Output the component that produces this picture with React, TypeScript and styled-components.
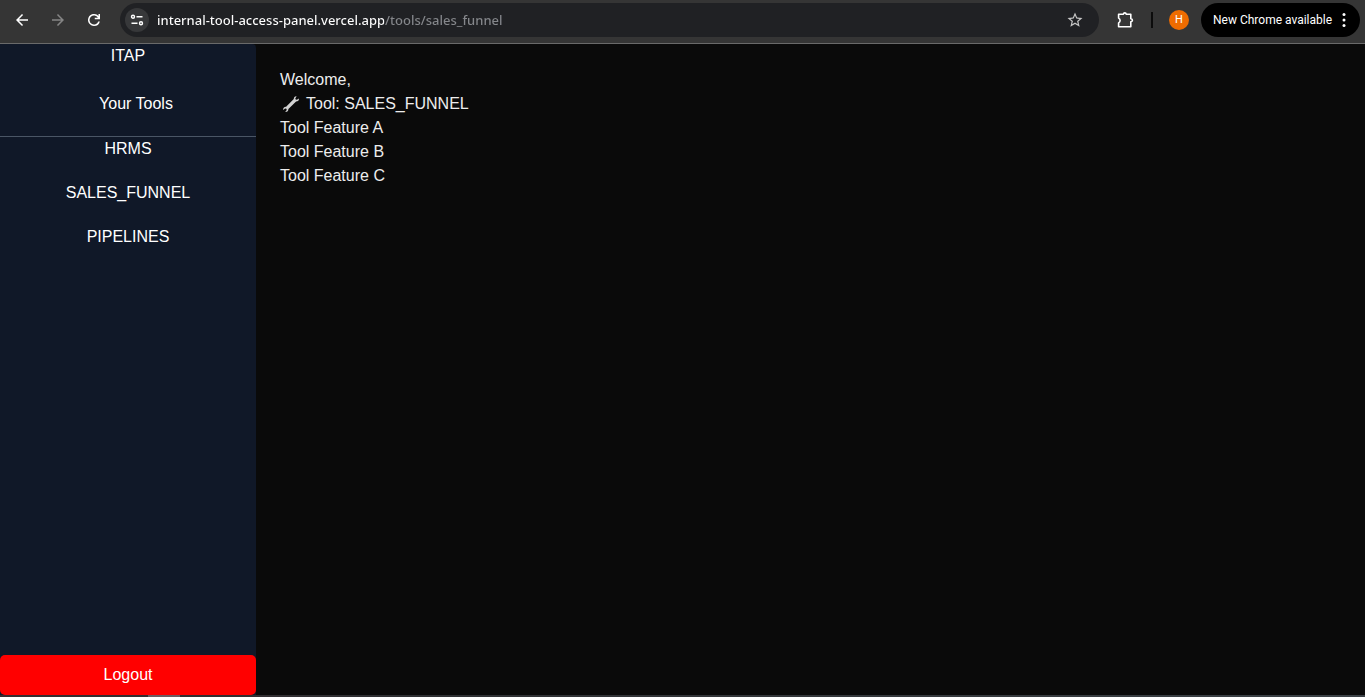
import React from "react";
import styled, { createGlobalStyle } from "styled-components";

const GlobalStyle = createGlobalStyle`
  *, *::before, *::after { box-sizing: border-box; }
  html, body, #root { height: 100%; }
  body {
    margin: 0;
    background: #0a0a0a;
    color: #ededed;
    font: 16px/24px "Liberation Sans", Arial, sans-serif;
  }
  button, input { margin: 0; padding: 0; border: 0; font: inherit; }
  button { cursor: pointer; }
`;

const Window = styled.div`
  display: flex;
  flex-direction: column;
  min-height: 100%;
`;

const BrowserBar = styled.header`
  display: flex;
  align-items: center;
  height: 44px;
  padding: 0 5px 4px 4px;
  border-bottom: 1px solid #6a6a6a;
  background: #353535;
  font-family: "Noto Sans", "Segoe UI", sans-serif;
`;

const IconButton = styled.button<{ $tone?: string }>`
  display: flex;
  flex: none;
  align-items: center;
  justify-content: center;
  width: 36px;
  height: 34px;
  background: transparent;
  color: ${(p) => p.$tone ?? "#ffffff"};
`;

const AddressBar = styled.div`
  display: flex;
  flex: 1;
  align-items: center;
  min-width: 0;
  height: 34px;
  margin: 0 8px;
  padding: 0 6px 0 5px;
  border-radius: 17px;
  background: #202124;
`;

const SiteInfo = styled(IconButton)`
  width: 24px;
  height: 24px;
  border-radius: 50%;
  background: #37383a;
`;

/* The host is bright and the path that follows it is dimmed. */
const AddressInput = styled.input`
  flex: 1;
  min-width: 0;
  height: 24px;
  margin-left: 8px;
  color: #ffffff;
  font-size: 13px;
  font-weight: 500;
  outline: none;
  background: linear-gradient(90deg, #ffffff 227px, #85878b 227px);
  background-clip: text;
  -webkit-background-clip: text;
  -webkit-text-fill-color: transparent;
`;

const Divider = styled.span`
  width: 2px;
  height: 16px;
  margin: 0 16px 0 8px;
  background: #0c0c0c;
`;

const Avatar = styled.button`
  flex: none;
  width: 20px;
  height: 20px;
  margin-right: 12px;
  border-radius: 50%;
  background: #ef6c00;
  color: #ffffff;
  font: 11px/20px Roboto, sans-serif;
`;

const UpdateButton = styled.button`
  display: flex;
  flex: none;
  align-items: center;
  justify-content: space-between;
  width: 159px;
  height: 34px;
  padding: 0 14px 0 12px;
  border-radius: 17px;
  background: #000000;
  color: #ffffff;
  font: 12px/24px Roboto, sans-serif;
  white-space: nowrap;
`;

const Page = styled.div`
  display: flex;
  flex: 1;
`;

const Sidebar = styled.aside`
  display: flex;
  flex: none;
  flex-direction: column;
  width: 256px;
  border-top-right-radius: 4px;
  background: #101828;
  color: #ffffff;
  text-align: center;
`;

const Brand = styled.div`
  padding-bottom: 24px;
`;

const SidebarTitle = styled.h2`
  margin: 0;
  padding: 0 0 20px 16px;
  border-bottom: 1px solid #4a5565;
  font-size: 16px;
  font-weight: 400;
`;

const ToolNav = styled.nav`
  display: flex;
  flex: 1;
  flex-direction: column;
  gap: 20px;
`;

const ToolLink = styled.a`
  color: inherit;
  text-decoration: none;
`;

const LogoutButton = styled.button`
  height: 40px;
  border-radius: 5px;
  background: #ff0000;
  color: #ffffff;
`;

const Content = styled.main`
  flex: 1;
  min-width: 0;
  padding: 24px;
`;

const Line = styled.p`
  display: flex;
  align-items: center;
  margin: 0;
`;

const WrenchSlot = styled.span`
  display: flex;
  justify-content: center;
  width: 22px;
  margin-right: 4px;
`;

const BottomEdge = styled.footer`
  display: flex;
  height: 2px;
  padding-left: 148px;
  background: linear-gradient(90deg, #372e32, #2e2f32 30%, #3b4146);
`;

const ActiveMark = styled.span`
  width: 32px;
  background: #6c5c62;
`;

const Glyph = ({ d, size = 18 }: { d: string; size?: number }) => (
  <svg width={size} height={size} viewBox="0 0 24 24" fill="currentColor" aria-hidden="true">
    <path d={d} />
  </svg>
);

const BACK = "M20 11H7.83l5.59-5.59L12 4l-8 8 8 8 1.41-1.41L7.83 13H20v-2z";
const FORWARD = "M12 4l-1.41 1.41L16.17 11H4v2h12.17l-5.58 5.59L12 20l8-8z";
const RELOAD =
  "M12 20a8 8 0 1 1 5.7-13.6L18 6.8V4h2v7h-7V9h4.2A6 6 0 1 0 17.7 14h2.1A8 8 0 0 1 12 20z";
const STAR =
  "M22 9.24l-7.19-.62L12 2 9.19 8.63 2 9.24l5.46 4.73L5.82 21 12 17.27 18.18 21l-1.63-7.03L22 9.24zM12 15.4l-3.76 2.27 1-4.28-3.32-2.88 4.38-.38L12 6.1l1.71 4.04 4.38.38-3.32 2.88 1 4.28L12 15.4z";

const SettingsGlyph = () => (
  <svg width="14" height="14" viewBox="0 0 14 14" fill="none" stroke="currentColor" strokeWidth="1.4" aria-hidden="true">
    <circle cx="3" cy="3.8" r="1.5" />
    <path d="M6.5 3.8H12.500M1.500 10.200h6" />
    <circle cx="11" cy="10.2" r="1.5" />
  </svg>
);

const PuzzleGlyph = () => (
  <svg width="18" height="18" viewBox="0 0 18 18" fill="none" stroke="currentColor" strokeWidth="1.6" strokeLinejoin="round" aria-hidden="true">
    <path d="M2.6 3.2h4.8c.2-1.800 2.600-1.800 2.800 0h4.600v4.600c2.200.2 2.200 2.800 0 3v5h-12.200v-3.900c2-1 2-3.800 0-4.800z" />
  </svg>
);

const DotsGlyph = () => (
  <svg width="4" height="16" viewBox="0 0 4 16" fill="currentColor" aria-hidden="true">
    <circle cx="2" cy="2.4" r="1.5" />
    <circle cx="2" cy="8" r="1.5" />
    <circle cx="2" cy="13.6" r="1.5" />
  </svg>
);

const WrenchGlyph = () => (
  <svg width="18" height="18" viewBox="0 0 18 18" aria-hidden="true">
    <path
      fill="#d2d2d2"
      d="M14.6 1.2l-1.3 2.2.4 1.2 1.2.2 2-1.4c.3 1.6-.9 3.1-2.8 3.1L6.4 13.9c.1 1.900-1.4 3.3-3.2 3l1.5-2-.3-1.2-1.2-.2-2 1.4c-.4-1.800 1-3.3 2.900-3.2l7.7-7.6c-.1-1.800 1.1-3.1 2.8-2.9z"
    />
  </svg>
);

const tools = ["HRMS", "SALES_FUNNEL", "PIPELINES"];
const features = ["Tool Feature A", "Tool Feature B", "Tool Feature C"];

export default function App() {
  return (
    <>
      <GlobalStyle />
      <Window>
        <BrowserBar>
          <IconButton aria-label="Back"><Glyph d={BACK} /></IconButton>
          <IconButton aria-label="Forward" $tone="#858585"><Glyph d={FORWARD} /></IconButton>
          <IconButton aria-label="Reload"><Glyph d={RELOAD} /></IconButton>
          <AddressBar>
            <SiteInfo aria-label="Site information"><SettingsGlyph /></SiteInfo>
            <AddressInput
              aria-label="Address"
              spellCheck={false}
              defaultValue="internal-tool-access-panel.vercel.app/tools/sales_funnel"
            />
            <IconButton aria-label="Bookmark" $tone="#c7c7c7"><Glyph d={STAR} /></IconButton>
          </AddressBar>
          <IconButton aria-label="Extensions"><PuzzleGlyph /></IconButton>
          <Divider />
          <Avatar aria-label="Profile">H</Avatar>
          <UpdateButton>New Chrome available<DotsGlyph /></UpdateButton>
        </BrowserBar>
        <Page>
          <Sidebar>
            <Brand>ITAP</Brand>
            <SidebarTitle>Your Tools</SidebarTitle>
            <ToolNav>
              {tools.map((tool) => (
                <ToolLink key={tool} href={`#${tool.toLowerCase()}`}>{tool}</ToolLink>
              ))}
            </ToolNav>
            <LogoutButton>Logout</LogoutButton>
          </Sidebar>
          <Content>
            <Line>Welcome,</Line>
            <Line><WrenchSlot><WrenchGlyph /></WrenchSlot>Tool: SALES_FUNNEL</Line>
            {features.map((feature) => <Line key={feature}>{feature}</Line>)}
          </Content>
        </Page>
        <BottomEdge><ActiveMark /></BottomEdge>
      </Window>
    </>
  );
}
